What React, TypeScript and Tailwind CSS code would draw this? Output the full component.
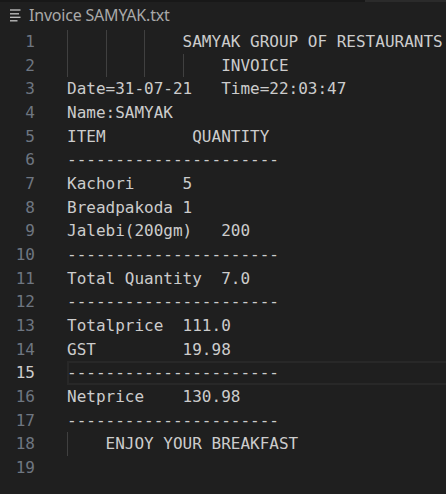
const lines: { indent: number; text: string }[] = [
  { indent: 3, text: "SAMYAK GROUP OF RESTAURANTS" },
  { indent: 4, text: "INVOICE" },
  { indent: 0, text: "Date=31-07-21   Time=22:03:47" },
  { indent: 0, text: "Name:SAMYAK" },
  { indent: 0, text: "ITEM         QUANTITY" },
  { indent: 0, text: "----------------------" },
  { indent: 0, text: "Kachori     5" },
  { indent: 0, text: "Breadpakoda 1" },
  { indent: 0, text: "Jalebi(200gm)   200" },
  { indent: 0, text: "----------------------" },
  { indent: 0, text: "Total Quantity  7.0" },
  { indent: 0, text: "----------------------" },
  { indent: 0, text: "Totalprice  111.0" },
  { indent: 0, text: "GST         19.98" },
  { indent: 0, text: "----------------------" },
  { indent: 0, text: "Netprice    130.98" },
  { indent: 0, text: "----------------------" },
  { indent: 1, text: "ENJOY YOUR BREAKFAST" },
  { indent: 0, text: "" },
];

const ACTIVE = 15;

// plain-text file glyph used in the breadcrumb
function FileIcon() {
  return (
    <svg width="11" height="13" viewBox="0 0 11 13" className="shrink-0">
      <g stroke="#c5c5c5" strokeWidth="1.3">
        <line x1="0" y1="1" x2="10.5" y2="1" />
        <line x1="0" y1="4.8" x2="9" y2="4.8" />
        <line x1="0" y1="8.3" x2="10.5" y2="8.3" />
        <line x1="0" y1="11.8" x2="7.5" y2="11.8" />
      </g>
    </svg>
  );
}

export default function App() {
  return (
    <div className="w-[446px] h-[494px] bg-[#1f1f1f] overflow-hidden">
      <div className="flex h-[2px]">
        <div className="w-[365px] bg-[#181818]" />
        <div className="flex-1 bg-[#2b2b2b]" />
      </div>
      <div className="h-[28px] flex items-center gap-[8px] pl-[10px] pb-[2px] text-[#a9a9a9] text-[16px] font-['Noto_Sans',sans-serif] tracking-[-0.2px]">
        <FileIcon />
        <span>Invoice SAMYAK.txt</span>
      </div>
      <div className="font-['DejaVu_Sans_Mono',monospace] text-[16px] leading-[23.67px]">
        {lines.map((l, i) => {
          const n = i + 1;
          const active = n === ACTIVE;
          return (
            <div key={n} className="flex h-[23.67px]">
              <div
                className={`w-[35px] text-right shrink-0 ${
                  active ? "text-[#cccccc]" : "text-[#6e7681]"
                }`}
              >
                {n}
              </div>
              <div
                className={`ml-[32px] flex-1 whitespace-pre text-[#cccccc] ${
                  active ? "shadow-[inset_2px_2px_0_#282828,inset_0_-2px_0_#282828]" : ""
                }`}
              >
                {Array.from({ length: l.indent }).map((_, k) => (
                  <span
                    key={k}
                    className="inline-block w-[4ch] h-[23.67px] align-top border-l border-[#404040]"
                  />
                ))}
                {l.text}
              </div>
            </div>
          );
        })}
      </div>
    </div>
  );
}
